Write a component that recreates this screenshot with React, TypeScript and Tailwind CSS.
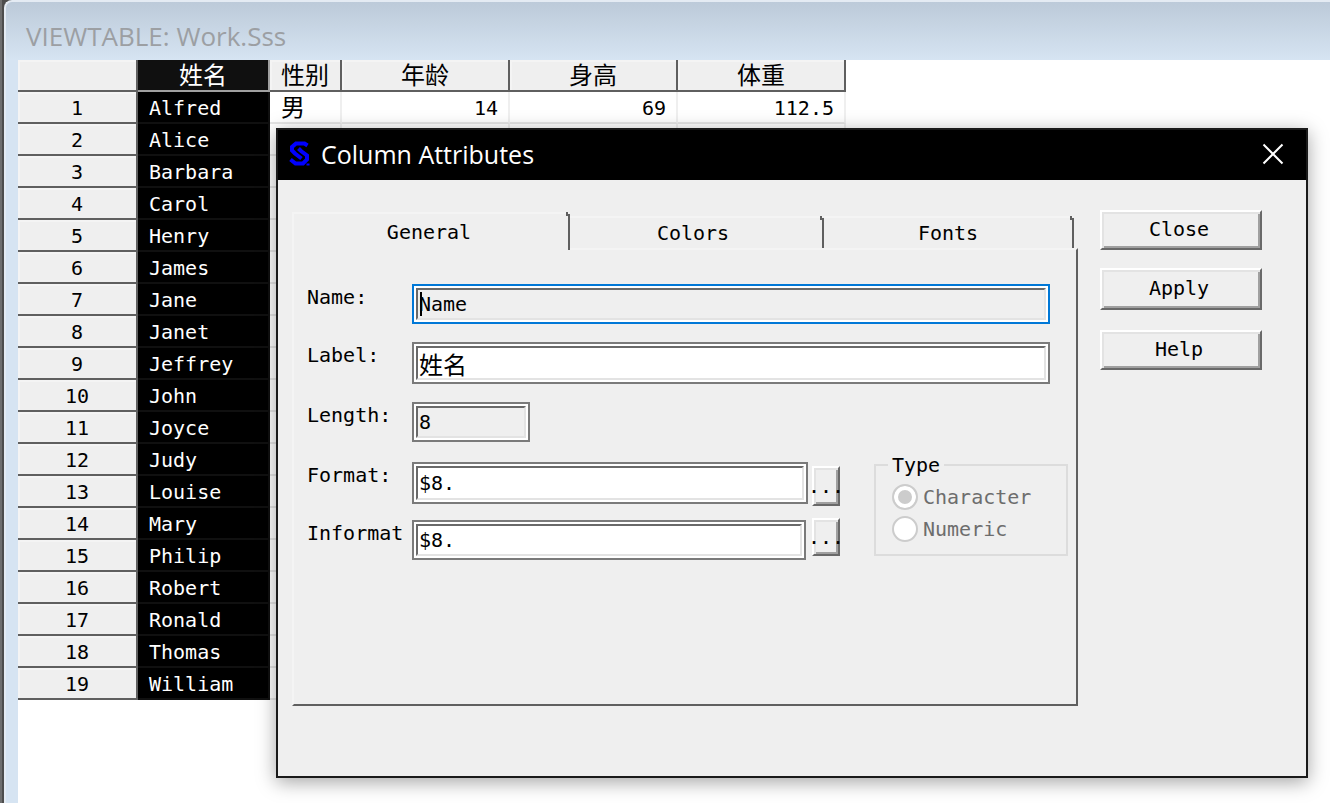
import type { InputHTMLAttributes, ReactNode } from 'react';

const names = [
  'Alfred', 'Alice', 'Barbara', 'Carol', 'Henry', 'James', 'Jane', 'Janet', 'Jeffrey', 'John',
  'Joyce', 'Judy', 'Louise', 'Mary', 'Philip', 'Robert', 'Ronald', 'Thomas', 'William',
];

const headCell =
  'border-r-2 border-b-2 border-[#5f5f5f] bg-[#efefef] p-0 pt-0.5 text-center text-[24px] font-normal shadow-[inset_2px_2px_0_#f4f4f4]';
const dataCell = 'border-r-2 border-b-2 border-r-[#efefef] border-b-[#e6e6e6] bg-white p-0 pt-0.5 pr-2.5 text-right';

function DataGrid() {
  return (
    <table className="w-[828px] table-fixed border-separate border-spacing-0 leading-7">
      <colgroup>
        <col className="w-[120px]" />
        <col className="w-[132px]" />
        <col className="w-[72px]" />
        <col className="w-[168px]" />
        <col className="w-[168px]" />
        <col className="w-[168px]" />
      </colgroup>
      <thead>
        <tr className="h-8">
          <td className={headCell}></td>
          <th scope="col" className="border-r-2 border-b-2 border-[#a0a0a0] bg-[#101010] p-0 pt-0.5 text-[24px] font-normal text-white">
            姓名
          </th>
          <th scope="col" className={headCell}>性别</th>
          <th scope="col" className={headCell}>年龄</th>
          <th scope="col" className={headCell}>身高</th>
          <th scope="col" className={headCell}>体重</th>
        </tr>
      </thead>
      <tbody>
        {names.map((name, i) => (
          <tr key={name} className="h-8">
            <th
              scope="row"
              className="border-r-2 border-b-2 border-[#5f5f5f] bg-[#efefef] p-0 pt-0.5 font-normal shadow-[inset_2px_2px_0_#f4f4f4]"
            >
              {i + 1}
            </th>
            <td className="border-r-2 border-b-2 border-[#101010] bg-black p-0 pt-0.5 pl-[11px] text-white">{name}</td>
            <td className="border-r-2 border-b-2 border-r-[#efefef] border-b-[#e6e6e6] bg-white p-0 pt-0.5 pl-[11px] text-[24px]">
              {i === 0 ? '男' : ''}
            </td>
            <td className={dataCell}>{i === 0 ? '14' : ''}</td>
            <td className={dataCell}>{i === 0 ? '69' : ''}</td>
            <td className={dataCell}>{i === 0 ? '112.5' : ''}</td>
          </tr>
        ))}
      </tbody>
    </table>
  );
}

function SasLogo() {
  return (
    <svg viewBox="0 0 22 26" className="h-[26px] w-[22px]" fill="none" stroke="#0000ff" aria-hidden="true">
      <path d="M18.5 4.5L15.5 2.5H7L3 6V9.5L6 12.5L12.5 17.5" strokeWidth="4" />
      <path d="M9.5 7.5L12 10L18 14.5V18.5L14 22.5H6.5L1.5 18.5" strokeWidth="4" />
      <path d="M17.5 23.5H20.5" strokeWidth="2" />
    </svg>
  );
}

const bevel =
  'border-2 border-t-white border-l-white border-r-[#696969] border-b-[#696969] bg-[#efefef] shadow-[inset_2px_2px_0_#e3e3e3,inset_-2px_-2px_0_#a0a0a0]';

type FieldProps = InputHTMLAttributes<HTMLInputElement> & {
  id: string;
  label: string;
  row: string;
  box: string;
  focused?: boolean;
};

function Field({ id, label, row, box, focused, className = '', ...rest }: FieldProps) {
  return (
    <div className={`flex items-start ${row}`}>
      <label htmlFor={id} className="w-[105px] shrink-0 leading-[26px]">
        {label}
      </label>
      <div className={`relative border-2 bg-white p-0.5 ${focused ? 'border-[#0078d7]' : 'border-[#7a7a7a]'} ${box}`}>
        <input
          id={id}
          className={`block h-full w-full border-2 border-t-[#696969] border-r-[#e3e3e3] border-b-[#e3e3e3] border-l-[#696969] p-0 pl-px outline-none ${className}`}
          {...rest}
        />
        {focused && <span className="absolute top-1.5 left-1.5 h-6 w-0.5 bg-black" />}
      </div>
    </div>
  );
}

function Tab({ children, className, selected = false }: { children: ReactNode; className: string; selected?: boolean }) {
  return (
    <button
      type="button"
      role="tab"
      aria-selected={selected}
      className={`relative border-t-2 border-r-2 border-t-[#f4f4f4] border-r-[#efefef] ${className}`}
    >
      {children}
      <span className="absolute top-0 -right-0.5 bottom-0 w-0.5 bg-[#5f5f5f]" />
      <span className="absolute -top-0.5 right-0 h-1 w-0.5 bg-[#5f5f5f]" />
    </button>
  );
}

function Radio({ label, checked = false }: { label: string; checked?: boolean }) {
  return (
    <label className="flex h-8 items-center gap-[5px] pl-1 text-[#6d6d6d]">
      <input
        type="radio"
        name="type"
        disabled
        defaultChecked={checked}
        className="size-[26px] appearance-none rounded-full border-2 border-[#cccccc] bg-white shadow-[inset_0_0_0_4px_#fff] checked:bg-[#cccccc]"
      />
      {label}
    </label>
  );
}

function ColumnAttributes() {
  return (
    <section
      role="dialog"
      aria-labelledby="dialog-title"
      className="absolute top-32 right-[22px] left-[274px] border-2 border-[#1a1a1a] bg-[#efefef] shadow-[0_4px_18px_rgba(0,0,0,0.36)]"
    >
      <header className="flex h-[50px] items-center gap-2.5 bg-black pr-[22px] pb-0.5 pl-[11px] text-white">
        <SasLogo />
        <h2 id="dialog-title" className="flex-1 font-['Open_Sans','Noto_Sans',sans-serif] text-[25px] leading-8">
          Column Attributes
        </h2>
        <button type="button" aria-label="Close window">
          <svg viewBox="0 0 22 22" className="size-[22px]" stroke="white" strokeWidth="2" aria-hidden="true">
            <path d="M1.5 1.5L20.5 20.5M20.5 1.5L1.5 20.5" />
          </svg>
        </button>
      </header>

      <div className="flex items-start gap-[22px] pt-[30px] pr-11 pb-[70px] pl-3.5">
        <div className="min-w-0 flex-1 pt-0.5">
          <div role="tablist" className="flex items-end pr-1">
            <Tab selected className="z-10 -mb-0.5 h-[38px] w-[278px] border-l-2 border-l-[#f4f4f4] bg-[#efefef] pr-1">
              General
            </Tab>
            <Tab className="h-8 w-[254px] pr-1.5">Colors</Tab>
            <Tab className="h-8 flex-1">Fonts</Tab>
          </div>

          <div
            role="tabpanel"
            className="border-2 border-t-[#f4f4f4] border-r-[#5f5f5f] border-b-[#5f5f5f] border-l-[#f4f4f4] pt-[34px] pr-2 pb-36 pl-[13px]"
          >
            <Field
              id="name" label="Name:" row="h-[58px] pr-[18px]" box="h-10 flex-1" focused
              readOnly defaultValue="Name" className="bg-[#efefef]"
            />
            <Field
              id="label" label="Label:" row="h-[60px] pr-[18px]" box="h-[42px] flex-1"
              defaultValue="姓名" className="bg-white text-[24px]"
            />
            <Field
              id="length" label="Length:" row="h-[60px]" box="h-10 w-[118px]"
              readOnly defaultValue="8" className="bg-[#efefef]"
            />
            <div className="flex items-start">
              <div className="flex-1">
                <Field
                  id="format" label="Format:" row="h-[58px]" box="h-[42px] min-w-0 flex-1"
                  defaultValue="$8." className="bg-white"
                />
                <Field
                  id="informat" label="Informat" row="h-10 pr-0.5" box="h-10 min-w-0 flex-1"
                  defaultValue="$8." className="bg-white"
                />
              </div>
              <div className="flex flex-col gap-3 pt-1 pl-1">
                <button type="button" aria-label="Choose format" className={`flex h-10 w-7 items-center justify-center ${bevel}`}>
                  ...
                </button>
                <button type="button" aria-label="Choose informat" className={`flex h-[38px] w-7 items-center justify-center ${bevel}`}>
                  ...
                </button>
              </div>
              <fieldset className="-mt-[9px] ml-[34px] w-[194px] border-2 border-[#dcdcdc] px-3 pt-1 pb-[9px]">
                <legend className="px-1 leading-6">Type</legend>
                <Radio label="Character" checked />
                <Radio label="Numeric" />
              </fieldset>
            </div>
          </div>
        </div>

        <div className="flex w-[162px] shrink-0 flex-col">
          <button type="button" className={`mb-[18px] h-10 pr-1 pb-0.5 ${bevel}`}>Close</button>
          <button type="button" className={`mb-5 h-[42px] pr-1 pb-0.5 ${bevel}`}>Apply</button>
          <button type="button" className={`h-10 pr-1 pb-0.5 ${bevel}`}>Help</button>
        </div>
      </div>
    </section>
  );
}

export default function App() {
  return (
    <div className="relative min-h-screen overflow-hidden border-l-2 border-[#6e6e6e] bg-[#4d4d4d] pl-0.5 font-['DejaVu_Sans_Mono','Noto_Sans_CJK_SC',monospace] text-[20px] text-black">
      <main className="flex min-h-screen flex-col rounded-tl-lg border-t-2 border-l-2 border-[#e4ebf3] bg-[#d6e4f2]">
        <header className="flex h-[58px] items-center rounded-tl-md bg-linear-to-b from-[#bccad9] to-[#d6e4f2] pt-2.5 pl-5">
          <h1 className="font-['Open_Sans','Noto_Sans',sans-serif] text-[26px] leading-8 text-[#9c9fa3]">VIEWTABLE: Work.Sss</h1>
        </header>
        <div className="ml-3 flex-1 bg-white">
          <DataGrid />
        </div>
      </main>
      <ColumnAttributes />
    </div>
  );
}
